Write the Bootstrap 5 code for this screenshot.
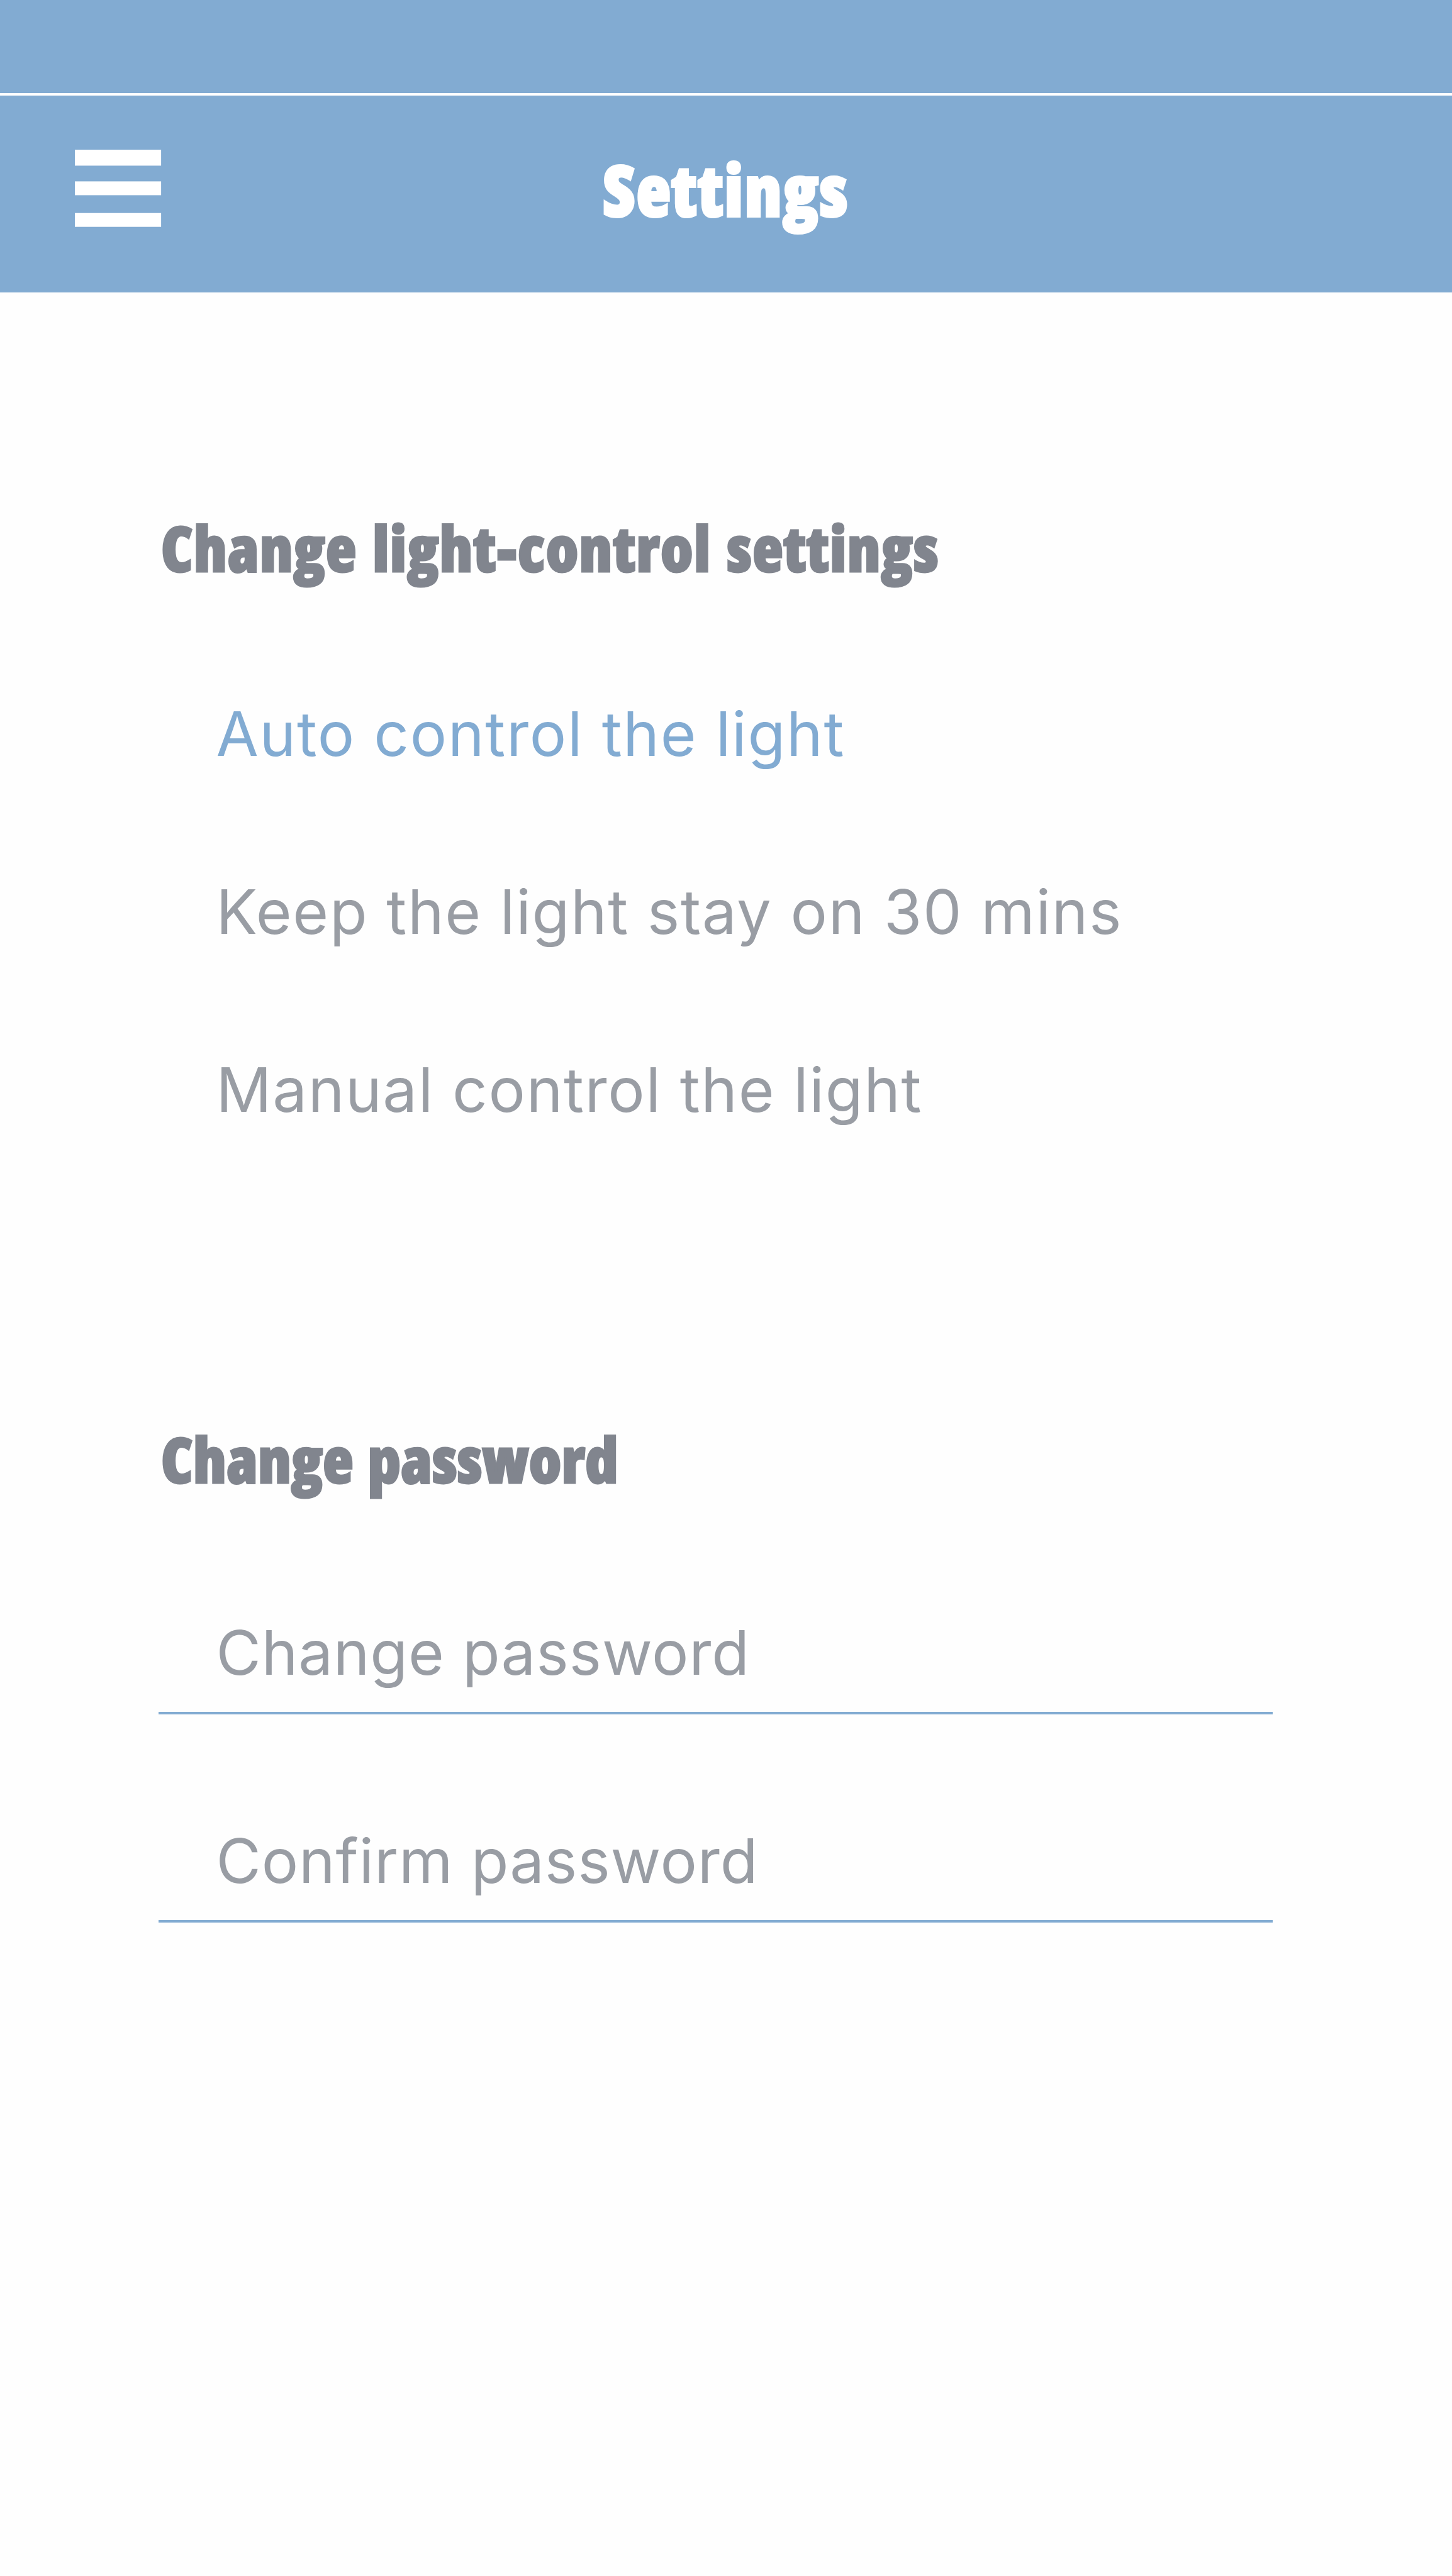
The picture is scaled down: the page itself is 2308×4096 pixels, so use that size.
<!DOCTYPE html>
<html lang="en">
<head>
<meta charset="utf-8">
<meta name="viewport" content="width=device-width, initial-scale=1">
<title>Settings</title>
<link href="https://cdn.jsdelivr.net/npm/bootstrap@5.3.0/dist/css/bootstrap.min.css" rel="stylesheet">
<style>
  :root { --sky: #82abd2; --slate: #81858e; --mist: #999da4; }
  body { background: #fefefe; font-family: Inter, "Liberation Sans", sans-serif; min-height: 4096px; }
  .status-strip { height: 152px; border-bottom: 4px solid #fff; }
  .sky-bg { background: var(--sky); }
  .top-nav { height: 313px; }
  .nav-side { width: 256px; padding: 86px 0 0 119px; }
  .menu-btn { line-height: 0; width: 137px; height: 123px; }
  .display-type {
    font-family: "Open Sans", "Noto Sans", sans-serif;
    font-weight: 800; font-stretch: 75%; line-height: 120px; white-space: nowrap;
  }
  .page-title { font-size: 112px; letter-spacing: 2.2px; margin-top: 89px; -webkit-text-stroke: 4px #fff; }
  .settings-main { padding: 345px 285px 0 252px; }
  .group-title { font-size: 100px; color: var(--slate); -webkit-text-stroke: 3px var(--slate); padding-left: 4px; }
  .title-light { letter-spacing: 1.25px; word-spacing: 6px; margin-bottom: 177px; }
  .title-password { letter-spacing: .3px; word-spacing: 5px; margin-bottom: 189px; }
  .option-list { gap: 163px; margin-bottom: 466px; padding-left: 91.5px; }
  .option-list a, .field-label { font-size: 97.6px; line-height: 120px; white-space: nowrap; color: var(--mist); }
  .option-list a { letter-spacing: 1.63px; }
  .option-list a.active { color: var(--sky); letter-spacing: 1.74px; }
  .field-list { gap: 173px; }
  .field-row { padding: 0 0 34px 91.5px; border-bottom: 4px solid var(--sky); }
  .field-label { letter-spacing: .84px; }
</style>
</head>
<body>
<header class="text-white">
  <div class="status-strip sky-bg"></div>
  <nav class="top-nav sky-bg d-flex align-items-start">
    <div class="nav-side flex-shrink-0">
      <button class="menu-btn btn border-0 rounded-0 p-0 d-block" type="button" aria-label="Menu">
        <svg width="138" height="123" viewBox="0 0 138 123" fill="#fff" aria-hidden="true">
          <rect x="-.2" y="0" width="137.3" height="25.4"/>
          <rect x="-.2" y="50.4" width="137.3" height="22"/>
          <rect x="-.2" y="100.7" width="137.3" height="22"/>
        </svg>
      </button>
    </div>
    <h1 class="page-title display-type flex-grow-1 text-center mb-0">Settings</h1>
    <div class="nav-side flex-shrink-0"></div>
  </nav>
</header>
<main class="settings-main">
  <section>
    <h2 class="group-title title-light display-type">Change light-control settings</h2>
    <ul class="option-list list-unstyled d-flex flex-column align-items-start">
      <li><a class="active d-block text-decoration-none" href="#">Auto control the light</a></li>
      <li><a class="d-block text-decoration-none" href="#">Keep the light stay on 30 mins</a></li>
      <li><a class="d-block text-decoration-none" href="#">Manual control the light</a></li>
    </ul>
  </section>
  <section>
    <h2 class="group-title title-password display-type">Change password</h2>
    <form class="field-list d-flex flex-column">
      <div class="field-row"><label class="field-label d-block">Change password</label></div>
      <div class="field-row"><label class="field-label d-block">Confirm password</label></div>
    </form>
  </section>
</main>
<script src="https://cdn.jsdelivr.net/npm/bootstrap@5.3.0/dist/js/bootstrap.bundle.min.js"></script>
</body>
</html>
